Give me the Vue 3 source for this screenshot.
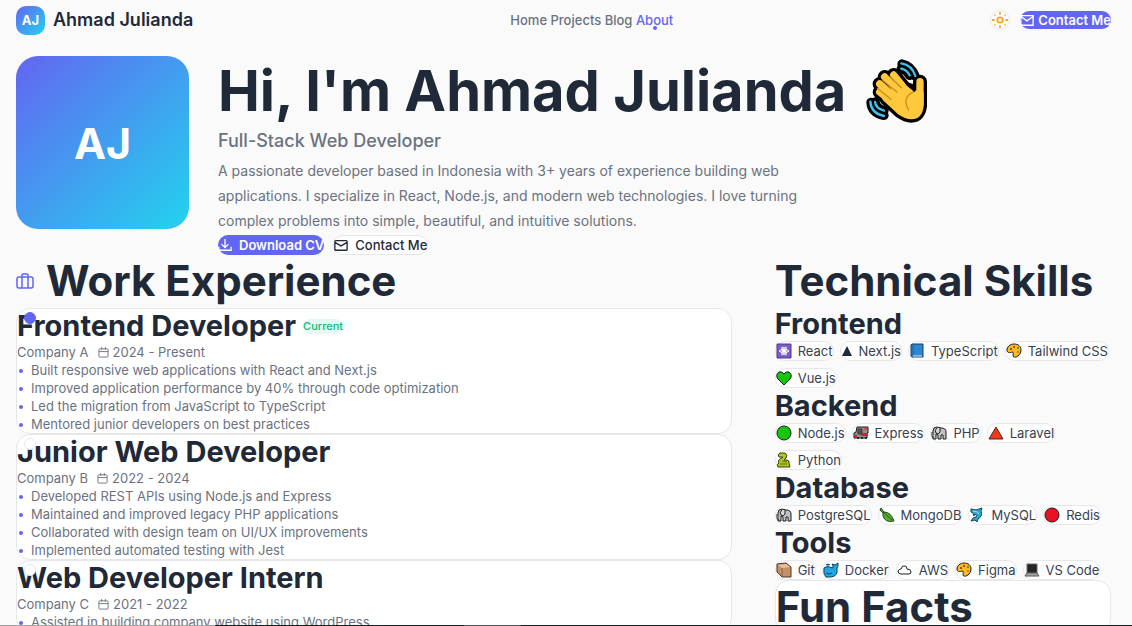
<script setup>
const links = ['Home', 'Projects', 'Blog', 'About']

const jobs = [
  {
    title: 'Frontend Developer',
    company: 'Company A',
    period: '2024 - Present',
    current: true,
    points: [
      'Built responsive web applications with React and Next.js',
      'Improved application performance by 40% through code optimization',
      'Led the migration from JavaScript to TypeScript',
      'Mentored junior developers on best practices',
    ],
  },
  {
    title: 'Junior Web Developer',
    company: 'Company B',
    period: '2022 - 2024',
    points: [
      'Developed REST APIs using Node.js and Express',
      'Maintained and improved legacy PHP applications',
      'Collaborated with design team on UI/UX improvements',
      'Implemented automated testing with Jest',
    ],
  },
  {
    title: 'Web Developer Intern',
    company: 'Company C',
    period: '2021 - 2022',
    points: ['Assisted in building company website using WordPress'],
  },
]

const ink = '#1a1a1a'
const elephant = [
  { d: 'M2 14V6Q2 2 6 2L10 3Q15 3 15 7V14H12V10H10V14H7V10L5 9V14Z', fill: '#bfc3c6', stroke: ink },
  { d: 'M6 3Q3 5 5 8L7 9L9 7V3M1 7V11Q1 13 3 12', fill: '#d7dadc', stroke: ink },
]
const palette = [
  { d: 'M8 1C4 1 1 4 1 7C1 10 4 10 6 9C8 9 7 11 7 13C8 16 15 13 15 7C15 3 12 1 8 1Z', fill: '#fbbc1c', stroke: ink },
  { d: 'M4 5h2v2h-2z', fill: '#8a5a1c' },
  { d: 'M7 3h2v2h-2z', fill: '#d93a2b' },
  { d: 'M11 4h2v2h-2z', fill: '#3e9d3a' },
  { d: 'M11 8h2v2h-2z', fill: '#e8742a' },
]
const icons = {
  react: [
    { d: 'M1 1H15V15H1Z', fill: '#7a5cc9', stroke: '#4f3a8c' },
    { d: 'M3 8Q8 4 13 8Q8 12 3 8ZM6 4Q11 6 10 12Q5 10 6 4ZM10 4Q5 6 6 12Q11 10 10 4Z', stroke: '#fff' },
    { d: 'M7 7h2v2h-2z', fill: '#fff' },
  ],
  triangle: [{ d: 'M6 3L11 13H1Z', fill: '#1f2937' }],
  book: [
    { d: 'M3 1H14V14H3Q2 14 2 12V2Z', fill: '#2f86d0', stroke: '#173a5c' },
    { d: 'M4 13H13', stroke: '#e5e7eb' },
    { d: 'M4 2V12', stroke: '#1b5f9e' },
  ],
  palette,
  heart: [{ d: 'M8 15L2 9Q-1 5 3 2Q6 1 8 4Q10 1 13 2Q17 5 14 9Z', fill: '#16c60c', stroke: ink }],
  green: [{ d: 'M8 1A7 7 0 1 0 8 15A7 7 0 1 0 8 1Z', fill: '#16c60c', stroke: ink }],
  red: [{ d: 'M8 1A7 7 0 1 0 8 15A7 7 0 1 0 8 1Z', fill: '#e81224', stroke: ink }],
  train: [
    { d: 'M4 2H15V8H14V13H1V8L3 7Z', fill: '#8d9096', stroke: ink },
    { d: 'M5 4H9V9H5Z', fill: '#6b4b43', stroke: '#3b3b3b' },
    { d: 'M10 8H15V11H8V9H10Z', fill: '#c3272b' },
    { d: 'M11 3H14V5H11Z', fill: '#d8493f' },
    { d: 'M4 12h2v2h-2zM8 12h2v2h-2zM12 12h2v2h-2z', fill: '#2b2b2b' },
    { d: 'M1 10H4V12H1Z', fill: '#c3272b' },
  ],
  elephant,
  redTriangle: [{ d: 'M8 2L15 14H1Z', fill: '#f03a17', stroke: '#54251a' }],
  snake: [
    { d: 'M4 1H9Q12 3 10 6L8 8H11Q14 9 13 11L14 15H2Q0 12 3 11Q1 9 4 7L7 5H3Q1 3 4 1Z', fill: '#b3c81f', stroke: '#33400c' },
    { d: 'M4 12H11M6 9L11 10', stroke: '#5d7310' },
  ],
  leaf: [
    { d: 'M2 1L5 5Q12 5 15 14Q6 16 4 9L4 6L1 3Z', fill: '#4fae2c', stroke: '#244a18' },
    { d: 'M4 5L13 13', stroke: '#245c18' },
  ],
  dolphin: [
    { d: 'M2 2L7 3L13 1L12 4Q14 9 9 12L8 15L6 13L2 14L4 11L7 10Q9 8 6 7L5 9L4 6L2 5Z', fill: '#2ba9d3', stroke: '#124a5e' },
    { d: 'M4 4Q9 4 10 7', stroke: '#a9e3f5' },
  ],
  package: [
    { d: 'M1 2L10 1L15 5V15H6L1 10Z', fill: '#c39167', stroke: '#4d3625' },
    { d: 'M2 3L10 2L14 5L6 6Z', fill: '#e6c3a0' },
    { d: 'M6 6V14', stroke: '#8a6244' },
  ],
  whale: [
    { d: 'M1 6Q3 4 6 5L10 6V4L9 2L12 3L15 1V4L14 6V11Q12 15 8 15H3Q0 12 1 6Z', fill: '#20a7e6', stroke: '#0b4361' },
    { d: 'M5 5V2M3 3L5 2L7 3M3 11Q6 13 9 11', stroke: '#0b4361' },
  ],
  cloud: [{ d: 'M4 12Q1 12 1 9Q2 7 4 7Q5 3 8 4Q10 4 10 7Q14 7 14 10Q14 12 12 12Z', fill: '#fff', stroke: ink }],
  laptop: [
    { d: 'M3 2H13V11H3Z', fill: '#252525', stroke: '#666' },
    { d: 'M3 11H13L15 14H1Z', fill: '#a8a8a8', stroke: '#555' },
  ],
}

const groups = [
  {
    name: 'Frontend',
    skills: [['React', 'react'], ['Next.js', 'triangle'], ['TypeScript', 'book'], ['Tailwind CSS', 'palette'], ['Vue.js', 'heart']],
  },
  {
    name: 'Backend',
    skills: [['Node.js', 'green'], ['Express', 'train'], ['PHP', 'elephant'], ['Laravel', 'redTriangle'], ['Python', 'snake']],
  },
  {
    name: 'Database',
    skills: [['PostgreSQL', 'elephant'], ['MongoDB', 'leaf'], ['MySQL', 'dolphin'], ['Redis', 'red']],
  },
  {
    name: 'Tools',
    skills: [['Git', 'package'], ['Docker', 'whale'], ['AWS', 'cloud'], ['Figma', 'palette'], ['VS Code', 'laptop']],
  },
]
</script>

<template>
  <div class="page">
    <header class="header">
      <a class="brand" href="#"><span class="logo">AJ</span>Ahmad Julianda</a>
      <nav class="nav">
        <template v-for="link in links" :key="link">
          <a href="#" :class="{ active: link === 'About' }">{{ link }}</a>{{ ' ' }}
        </template>
      </nav>
      <div class="actions">
        <button class="theme" type="button" aria-label="Toggle theme">
          <svg viewBox="0 0 20 20" fill="none" stroke="#f5a524" stroke-width="2">
            <circle cx="10" cy="10" r="3" />
            <path d="M10 1V4M10 16V19M1 10H4M16 10H19M4 4L5 5M15 15L16 16M4 16L5 15M15 5L16 4" />
          </svg>
        </button>
        <button class="btn primary small" type="button">
          <svg viewBox="0 0 16 16"><path d="M1 3H15V14H1ZM1 4L8 9L15 4" /></svg>
          Contact Me
        </button>
      </div>
    </header>

    <main>
      <section class="hero">
        <div class="avatar">AJ</div>
        <div class="intro">
          <h1>
            Hi, I'm Ahmad Julianda
            <svg class="wave" viewBox="45 22 186 198" fill="none" stroke-linecap="round" stroke-linejoin="round">
              <g stroke="#000" stroke-width="28">
                <path d="M153 40Q180 45 192 76M151 54Q168 58 176 74M60 155Q62 186 99 194M72 154Q75 174 99 180" />
              </g>
              <g stroke="#000" stroke-width="42">
                <path d="M128 73L170 125M101 79L150 130M86 100L140 148M86 124L150 175M207 93V160" />
                <path d="M150 110L186 122L207 120V165Q204 195 181 195Q166 195 148 182L105 142Z" fill="#000" />
              </g>
              <g stroke="#3fc3ee" stroke-width="7">
                <path d="M151 38Q183 43 193 76M151 54Q168 58 176 74M58 153Q60 188 99 196M72 154Q75 174 99 180" />
              </g>
              <g stroke="#ffc83d" stroke-width="22">
                <path d="M128 73L170 125M101 79L150 130M86 100L140 148M86 124L150 175M207 93V160" />
                <path d="M150 110L186 130L207 130V165Q204 195 181 195Q166 195 148 182L105 142Z" fill="#ffc83d" />
              </g>
              <path d="M119 80L151 111M94 88L138 124M79 113L120 146M190 122C162 134 159 154 173 178" stroke="#c98f1e" stroke-width="4" />
              <path d="M166 97L190 119V103" stroke="#000" stroke-width="8" fill="#000" />
            </svg>
          </h1>
          <p class="role">Full-Stack Web Developer</p>
          <p class="bio">
            A passionate developer based in Indonesia with 3+ years of experience building web
            applications. I specialize in React, Node.js, and modern web technologies. I love turning
            complex problems into simple, beautiful, and intuitive solutions.
          </p>
          <div class="cta">
            <button class="btn primary" type="button">
              <svg viewBox="0 0 16 16"><path d="M8 1V10M4 7L8 11L12 7M1 10V14H15V10" /></svg>
              Download CV
            </button>
            <button class="btn outline" type="button">
              <svg viewBox="0 0 16 16"><path d="M2 3H14Q15 3 15 4V13Q15 14 14 14H2Q1 14 1 13V4Q1 3 2 3ZM1 5L8 9L15 5" /></svg>
              Contact Me
            </button>
          </div>
        </div>
      </section>

      <div class="columns">
        <section class="work">
          <h2>
            <svg class="case" viewBox="0 0 18 18">
              <path d="M3 5H15Q17 5 17 7V14Q17 16 15 16H3Q1 16 1 14V7Q1 5 3 5ZM6 16V3Q6 2 7 2H11Q12 2 12 3V16" />
            </svg>
            Work Experience
          </h2>
          <article v-for="job in jobs" :key="job.title" class="job">
            <div class="job-head">
              <h3>{{ job.title }}</h3>
              <span v-if="job.current" class="badge">Current</span>
            </div>
            <div class="meta">
              <span>{{ job.company }}</span>
              <span class="period">
                <svg viewBox="0 0 12 12"><path d="M2 2H10Q11 2 11 3V10Q11 11 10 11H2Q1 11 1 10V3Q1 2 2 2ZM1 5H11M4 0V3M8 0V3" /></svg>
                {{ job.period }}
              </span>
            </div>
            <ul>
              <li v-for="point in job.points" :key="point">{{ point }}</li>
            </ul>
            <span class="marker" :class="{ filled: job.current }"></span>
          </article>
        </section>

        <aside class="skills">
          <h2>Technical Skills</h2>
          <section v-for="group in groups" :key="group.name">
            <h3>{{ group.name }}</h3>
            <ul class="chips">
              <li v-for="[name, icon] in group.skills" :key="name">
                <svg :class="icon" :viewBox="icon === 'triangle' ? '0 0 12 16' : '0 0 16 16'">
                  <path v-for="(p, i) in icons[icon]" :key="i" :d="p.d" :fill="p.fill || 'none'" :stroke="p.stroke || 'none'" />
                </svg>
                {{ name }}
              </li>
            </ul>
          </section>
          <section class="facts"><h2>Fun Facts</h2></section>
        </aside>
      </div>
    </main>
    <div class="edge"></div>
  </div>
</template>

<style>
body {
  background: #fafafa;
}
</style>

<style scoped>
.page {
  height: 100vh;
  overflow: hidden;
  box-sizing: border-box;
  padding: 0 21px 0 16px;
  font-family: Inter, "Liberation Sans", sans-serif;
  font-size: 13px;
  line-height: 18px;
  color: #1f2937;
}
h1, h2, h3, p, ul {
  margin: 0;
  padding: 0;
}
ul {
  list-style: none;
}
a {
  color: inherit;
  text-decoration: none;
}
svg {
  flex: none;
}
.header {
  display: flex;
  align-items: center;
  justify-content: space-between;
  height: 40px;
}
.brand {
  display: flex;
  align-items: center;
  gap: 8px;
  font-size: 18px;
  font-weight: 600;
}
.logo {
  display: grid;
  place-items: center;
  width: 29px;
  height: 29px;
  border-radius: 10px;
  background: linear-gradient(135deg, #6366f1, #22d3ee);
  color: #fff;
  font-size: 13px;
  font-weight: 700;
}
.nav {
  color: #6b7280;
  font-weight: 500;
}
.nav .active {
  position: relative;
  color: #6366f1;
}
.nav .active::after {
  content: "";
  position: absolute;
  left: 50%;
  bottom: -2px;
  width: 4px;
  height: 4px;
  margin-left: -2px;
  border-radius: 50%;
  background: #6366f1;
}
.actions {
  display: flex;
  align-items: center;
  gap: 10px;
}
button {
  font: inherit;
  padding: 0;
}
.theme {
  display: grid;
  place-items: center;
  width: 20px;
  height: 20px;
  border: 1px solid #e5e7eb;
  border-radius: 50%;
  background: #fff;
}
.theme svg {
  width: 18px;
  height: 18px;
}
.btn {
  display: flex;
  align-items: center;
  gap: 7px;
  height: 20px;
  border: 0;
  border-radius: 10px;
  font-weight: 500;
  white-space: nowrap;
}
.btn svg {
  width: 14px;
  height: 14px;
  fill: none;
  stroke: currentColor;
  stroke-width: 1.5;
}
.primary {
  background: #6366f1;
  color: #fff;
  font-weight: 600;
}
.small {
  height: 18px;
  gap: 4px;
}
.outline {
  border: 1px solid #e5e7eb;
  background: #fff;
  color: #1f2937;
}
.hero {
  display: flex;
  align-items: flex-start;
  gap: 29px;
  padding-top: 16px;
}
.avatar {
  display: grid;
  place-items: center;
  flex: none;
  width: 173px;
  height: 173px;
  border-radius: 22px;
  background: linear-gradient(135deg, #6366f1, #22d3ee);
  color: #fff;
  font-size: 43px;
  line-height: 52px;
  font-weight: 700;
}
.intro {
  flex: 1;
}
h1 {
  display: flex;
  align-items: center;
  gap: 20px;
  font-size: 56px;
  line-height: 70px;
  font-weight: 700;
}
.wave {
  width: 62px;
  height: 66px;
}
.role {
  margin-bottom: 2px;
  color: #6b7280;
  font-size: 18px;
  line-height: 30px;
  font-weight: 500;
}
.bio {
  max-width: 605px;
  margin-bottom: 2px;
  color: #6b7280;
  font-size: 14px;
  line-height: 25px;
}
.cta {
  display: flex;
  gap: 9px;
}
.columns {
  display: grid;
  grid-template-columns: repeat(3, 1fr);
  gap: 43px;
}
.work {
  grid-column: span 2;
}
h2 {
  display: flex;
  align-items: center;
  gap: 12px;
  font-size: 42px;
  line-height: 51px;
  font-weight: 700;
  white-space: nowrap;
}
.work h2 {
  margin-bottom: 2px;
}
.case {
  width: 18px;
  height: 18px;
  fill: none;
  stroke: #6366f1;
  stroke-width: 1.5;
}
h3 {
  font-size: 29px;
  line-height: 34px;
  font-weight: 700;
}
.job {
  position: relative;
  border: 1px solid #e5e7eb;
  border-radius: 14px;
  background: #fff;
}
.job-head {
  display: flex;
  align-items: center;
  gap: 7px;
}
.badge {
  border-radius: 8px;
  background: #e7f8f2;
  color: #10b981;
  font-size: 11px;
  line-height: 15px;
  font-weight: 500;
}
.meta, .period {
  display: flex;
  align-items: center;
}
.meta {
  gap: 9px;
  color: #6b7280;
}
.period {
  gap: 4px;
}
.period svg {
  width: 11px;
  height: 11px;
  fill: none;
  stroke: currentColor;
}
.job li {
  position: relative;
  padding-left: 14px;
  color: #6b7280;
}
.job li::before {
  content: "";
  position: absolute;
  left: 2px;
  top: 8px;
  width: 4px;
  height: 4px;
  border-radius: 50%;
  background: #6366f1;
}
.marker {
  position: absolute;
  left: 7px;
  top: 3px;
  box-sizing: border-box;
  width: 12px;
  height: 12px;
  border: 1px solid #e5e7eb;
  border-radius: 50%;
  background: #fff;
}
.filled {
  border-color: #6366f1;
  background: #6366f1;
}
.skills h3 {
  line-height: 35px;
}
.chips {
  display: flex;
  flex-wrap: wrap;
  gap: 7px 6px;
}
.chips li {
  display: flex;
  align-items: center;
  gap: 6px;
  box-sizing: border-box;
  height: 20px;
  border: 1px solid #e5e7eb;
  border-radius: 10px;
  background: #fff;
  color: #374151;
}
.chips svg {
  width: 16px;
  height: 16px;
}
.chips .triangle {
  width: 12px;
}
.facts {
  border: 1px solid #e5e7eb;
  border-radius: 14px;
  background: #fff;
}
.edge {
  position: fixed;
  inset: auto 0 0 0;
  height: 1px;
  background: linear-gradient(90deg, #a3a5a5 0 19%, #14201f 19% 41%, #4b5553 41% 46%, #14201f 46%);
}
</style>
